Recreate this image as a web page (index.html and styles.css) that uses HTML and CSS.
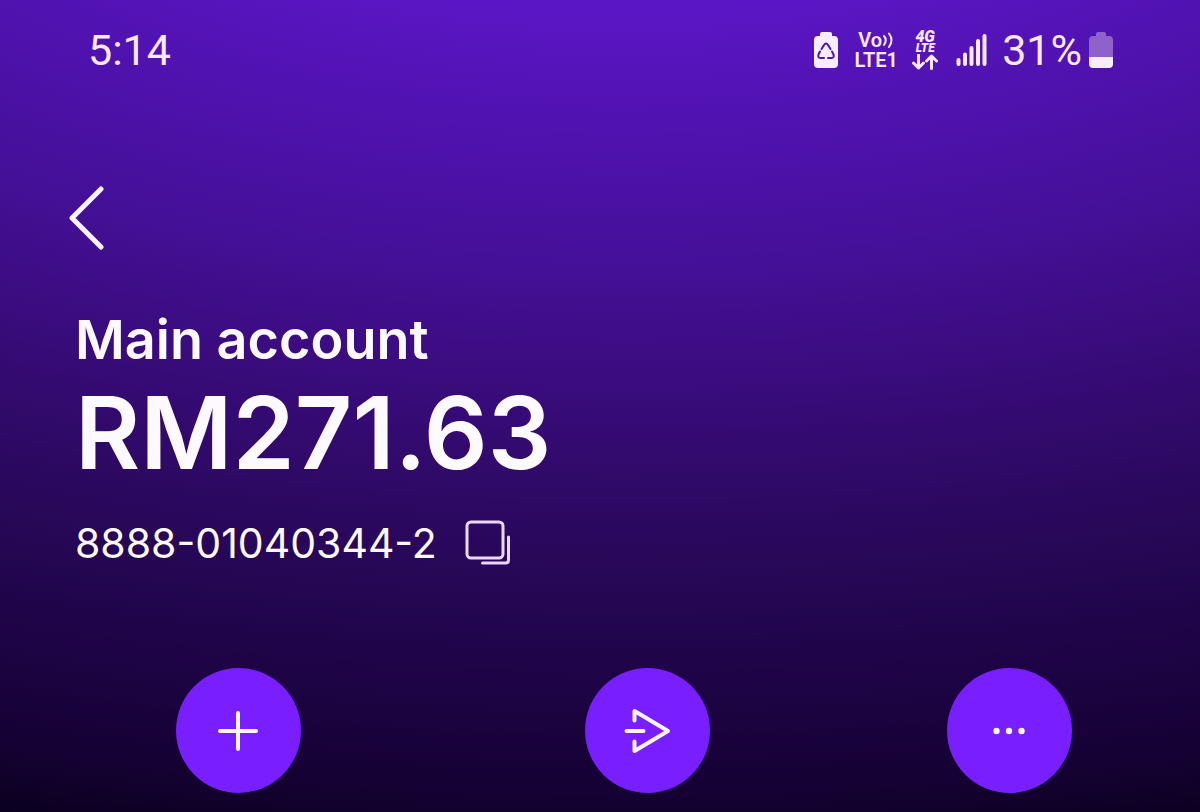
FILE: index.html
```html
<!DOCTYPE html>
<html lang="en">
<head>
<meta charset="utf-8">
<meta name="viewport" content="width=device-width, initial-scale=1">
<title>Main account</title>
<link rel="stylesheet" href="styles.css">
</head>
<body>
<div class="screen">
  <header class="status">
    <time class="status-text">5:14</time>
    <div class="status-icons">
      <svg class="icon-eco" width="26" height="36" viewBox="0 0 26 36" aria-hidden="true">
        <path class="fill" d="M7 4V2q0-2 2-2h8q2 0 2 2v2h2q4 0 4 4v24q0 4-4 4H5q-4 0-4-4V8q0-4 4-4z"/>
        <g class="recycle">
          <path d="M8.500 17l2.500-4q2-3 4 0l2.500 4"/>
          <path d="M19 19.500l1.500 3q1 3.500-2 3.500H15"/>
          <path d="M7 19.500l-1.500 3q-1 3.500 2 3.500H11"/>
        </g>
      </svg>
      <div class="volte">
        <div class="volte-row">Vo<svg width="12" height="18" viewBox="0 0 12 18" aria-hidden="true"><path class="wave" d="M2 5q3.500 4 0 9M7 2.500q5 6.500 0 13.500"/></svg></div>
        <div class="volte-row">LTE1</div>
      </div>
      <div class="network">
        <div class="net-4g">4G</div>
        <div class="net-lte">LTE</div>
        <svg width="26" height="16" viewBox="0 0 26 16" aria-hidden="true"><path class="arrows" d="M6.500 1v13M1.500 9l5 5 5-5M19.500 14.500V2M14.500 7l5-5 5 5"/></svg>
      </div>
      <svg class="icon-signal" width="32" height="34" viewBox="0 0 32 34" aria-hidden="true">
        <path class="bars" d="M2.500 27v4M9 21.500v9.500M15.500 15v16M22 8v23M28.500 3v28"/>
      </svg>
      <span class="status-text">31%</span>
      <svg class="icon-battery" width="24" height="36" viewBox="0 0 24 36" aria-hidden="true">
        <path class="dim" d="M7 4V2q0-2 2-2h6q2 0 2 2v2h3q4 0 4 4v17H0V8q0-4 4-4z"/>
        <path class="fill" d="M0 25h24v7q0 4-4 4H4q-4 0-4-4z"/>
      </svg>
    </div>
  </header>

  <nav class="topbar">
    <button class="plain back" type="button" aria-label="Back">
      <svg width="36" height="64" viewBox="0 0 36 64" aria-hidden="true"><path d="M32 3L3 32l29 29"/></svg>
    </button>
  </nav>

  <main>
    <section class="account">
      <h1 class="name">Main account</h1>
      <p class="balance">RM271.63</p>
      <div class="number-row">
        <span class="number">8888-01040344-2</span>
        <button class="plain copy" type="button" aria-label="Copy account number">
          <svg width="46" height="46" viewBox="0 0 46 46" aria-hidden="true"><rect x="2" y="2" width="36" height="36" rx="4"/><path d="M43.500 17v23q0 3-3 3H17.500"/></svg>
        </button>
      </div>
    </section>

    <section class="actions">
      <button class="action" type="button" aria-label="Add money">
        <svg width="48" height="48" viewBox="0 0 48 48" aria-hidden="true"><path d="M24 6v36M6 24h36"/></svg>
      </button>
      <button class="action" type="button" aria-label="Send money">
        <svg width="48" height="48" viewBox="0 0 48 48" aria-hidden="true"><path d="M11.500 13.500V4L45 24 11.500 44v-9.500M3.500 24h17"/></svg>
      </button>
      <button class="action" type="button" aria-label="More">
        <svg width="48" height="48" viewBox="0 0 48 48" aria-hidden="true"><g class="dots"><circle cx="11.500" cy="24" r="3.200"/><circle cx="24" cy="24" r="3.200"/><circle cx="36.500" cy="24" r="3.200"/></g></svg>
      </button>
    </section>
  </main>
</div>
</body>
</html>
```
FILE: styles.css
```css
* { box-sizing: border-box; }

body {
  margin: 0;
  color: #fcf9ff;
  font-family: Inter, "Liberation Sans", sans-serif;
}

.screen {
  min-height: 100vh;
  padding-top: 24px;
  background: radial-gradient(ellipse 210% 160% at 52% -40%, #5b16c6 25%, #5012b0 35%, #451099 45%, #3c0c82 53%, #310a6b 61%, #270757 69%, #1e0447 77%, #150133 86%, #0a001e 91%);
}

.status {
  display: flex;
  align-items: center;
  justify-content: space-between;
  height: 52px;
  padding: 0 87px 0 88px;
  color: #f8e8ff;
  font-family: Roboto, sans-serif;
}

.status-text {
  font-size: 43px;
  line-height: 52px;
}

.status-icons {
  display: flex;
  align-items: center;
}

.fill { fill: #f8ecff; }
.dim { fill: #8f62cb; }
.recycle, .wave, .arrows, .bars {
  fill: none;
  stroke: #f8e8ff;
  stroke-linecap: round;
  stroke-linejoin: round;
}
.recycle { stroke: #4a18a8; stroke-width: 2; }
.wave { stroke-width: 2; }
.arrows { stroke-width: 3; }
.bars { stroke-width: 4; }

.volte {
  width: 44px;
  margin: 0 14px 0 15px;
  font-size: 20px;
  font-weight: 600;
  line-height: 20px;
}
.volte-row {
  display: flex;
  align-items: center;
  justify-content: center;
}

.network {
  display: flex;
  flex-direction: column;
  align-items: center;
  width: 26px;
  margin-right: 18px;
  font-style: italic;
  font-weight: 900;
}
.net-4g { font-size: 16px; line-height: 13px; }
.net-lte { font-size: 12px; line-height: 11px; }

.icon-signal { margin-right: 14px; }
.icon-battery { margin-left: 7px; }

.plain {
  display: block;
  padding: 0;
  border: 0;
  background: none;
  cursor: pointer;
}
.plain svg, .action svg {
  display: block;
  fill: none;
  stroke: #fcf4ff;
  stroke-width: 4;
  stroke-linecap: round;
  stroke-linejoin: round;
}
.plain.back svg { stroke-width: 5; }

.topbar { padding: 110px 69px 0; }

.account { padding: 56px 75px 0; }

.name {
  margin: 0;
  font-size: 54px;
  font-weight: 600;
  line-height: 68px;
}

.balance {
  margin: 0;
  font-size: 100px;
  font-weight: 600;
  line-height: 118px;
}

.number-row {
  display: flex;
  align-items: center;
  gap: 28px;
  margin-top: 26px;
}

.number {
  font-size: 41px;
  line-height: 50px;
}

.plain.copy svg { stroke: #ecd8ff; stroke-width: 3; }

.actions {
  display: grid;
  grid-template-columns: 476fr 342fr 382fr;
  justify-items: center;
  padding: 100px 0 19px;
}

.action {
  display: grid;
  place-items: center;
  width: 125px;
  height: 125px;
  padding: 0;
  border: 0;
  border-radius: 50%;
  background: #781eff;
  cursor: pointer;
}

.action .dots { fill: #fcf4ff; stroke: none; }
```
